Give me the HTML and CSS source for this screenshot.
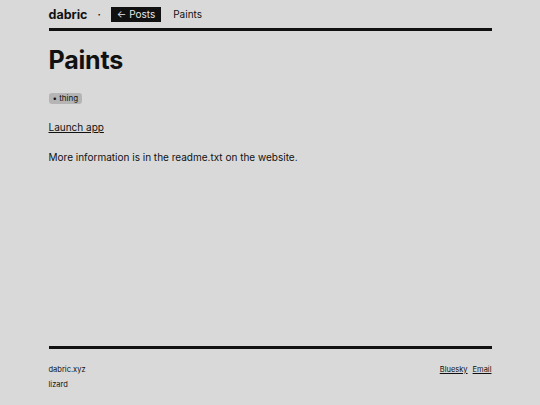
FILE: index.html
```html
<!DOCTYPE html>
<html>
<head>
<meta charset="utf-8">
<link rel="stylesheet" href="styles.css">
</head>
<body>
<div class="page">
  <header class="site-header">
    <a class="brand" href="#">dabric</a>
    <span class="sep">·</span>
    <a class="back" href="#">← Posts</a>
    <span class="crumb">Paints</span>
  </header>
  <main class="content">
    <h1 class="title">Paints</h1>
    <div class="tags"><span class="tag">• thing</span></div>
    <p class="launch"><a href="#">Launch app</a></p>
    <p class="info">More information is in the readme.txt on the website.</p>
  </main>
  <footer class="site-footer">
    <div class="foot-left">
      <div>dabric.xyz</div>
      <div>lizard</div>
    </div>
    <div class="foot-right">
      <a href="#">Bluesky</a>
      <a href="#">Email</a>
    </div>
  </footer>
</div>
</body>
</html>
```
FILE: styles.css
```css
html, body {
  margin: 0;
  padding: 0;
  background: #d9d9d9;
  color: #111;
  font-family: Inter, "Noto Sans", sans-serif;
}
.page {
  width: 443px;
  margin: 0 auto;
  min-height: 405px;
  display: flex;
  flex-direction: column;
}
a { color: #111; }
.site-header {
  display: flex;
  align-items: center;
  height: 28px;
  border-bottom: 3px solid #111;
  font-size: 10px;
}
.brand {
  font-weight: 700;
  font-size: 12.5px;
  text-decoration: none;
}
.sep {
  margin: 0 10px 0 10px;
  font-weight: 700;
}
.back {
  background: #111;
  color: #e8e8e8;
  text-decoration: none;
  padding: 0 6px 0 6px;
  line-height: 15px;
}
.crumb { margin-left: 12px; }
.content {
  flex: 1;
  padding-top: 14px;
}
.title {
  margin: 0;
  font-size: 25px;
  font-weight: 700;
  line-height: 30px;
  letter-spacing: -0.2px;
}
.tags { margin-top: 10px; }
.tag {
  display: inline-block;
  background: #b5b5b5;
  border-radius: 3px;
  font-size: 8px;
  line-height: 11px;
  padding: 0 4px;
}
.launch {
  margin: 16px 0 0;
  font-size: 10px;
}
.info {
  margin: 18px 0 0;
  font-size: 10px;
}
.site-footer {
  border-top: 3px solid #111;
  margin-bottom: 13px;
  padding-top: 14px;
  display: flex;
  justify-content: space-between;
  font-size: 7.5px;
  line-height: 14.5px;
}
.foot-right { display: flex; gap: 5px; }
```
